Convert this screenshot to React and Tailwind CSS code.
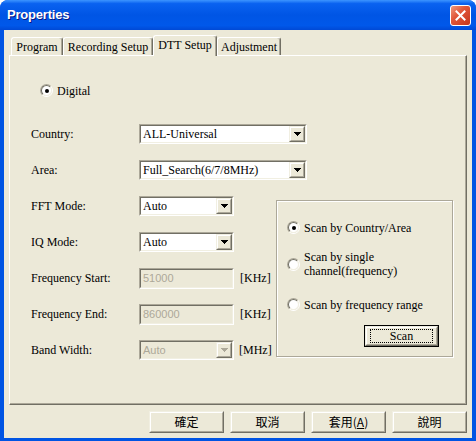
import React from 'react';

const serif = "font-['Liberation_Serif',serif] text-[12px]";

function Sunken({ className = '', inner = '', children }) {
  return (
    <div className={`border border-t-[#aca899] border-l-[#aca899] border-r-white border-b-white ${className}`}>
      <div className={`h-full border border-t-[#716f64] border-l-[#716f64] border-r-[#f1efe2] border-b-[#f1efe2] ${inner}`}>
        {children}
      </div>
    </div>
  );
}

function Raised({ className = '', children }) {
  return (
    <div className={`border border-t-[#f1efe2] border-l-[#f1efe2] border-r-[#716f64] border-b-[#716f64] bg-[#ece9d8] ${className}`}>
      <div className="h-full border border-t-white border-l-white border-r-[#aca899] border-b-[#aca899] flex items-center justify-center">
        {children}
      </div>
    </div>
  );
}

const Arrow = ({ color = '#000' }) => (
  <svg width="7" height="4" viewBox="0 0 7 4" shapeRendering="crispEdges">
    <rect x="0" y="0" width="7" height="1" fill={color} />
    <rect x="1" y="1" width="5" height="1" fill={color} />
    <rect x="2" y="2" width="3" height="1" fill={color} />
    <rect x="3" y="3" width="1" height="1" fill={color} />
  </svg>
);

function Combo({ w, value, disabled }) {
  return (
    <Sunken className={`h-[20px] ${w}`} inner={`flex items-center ${disabled ? 'bg-[#ece9d8]' : 'bg-white'}`}>
      <span
        className={
          disabled
            ? "flex-1 pl-[2px] font-['Liberation_Sans',sans-serif] text-[11px] text-[#aca899]"
            : `flex-1 pl-[2px] ${serif} text-black`
        }
      >
        {value}
      </span>
      <Raised className="w-[16px] h-[16px]">
        <Arrow color={disabled ? '#aca899' : '#000'} />
      </Raised>
    </Sunken>
  );
}

function TextBox({ value }) {
  return (
    <Sunken className="h-[21px] w-[95px]" inner="flex items-center bg-[#ece9d8]">
      <span className="pl-[2px] font-['Liberation_Sans',sans-serif] text-[11px] text-[#aca899]">{value}</span>
    </Sunken>
  );
}

function Radio({ checked }) {
  return (
    <div className="w-[13px] h-[13px] shrink-0 rounded-full border border-t-[#aca899] border-l-[#aca899] border-r-white border-b-white">
      <div className="w-full h-full rounded-full border border-t-[#716f64] border-l-[#716f64] border-r-[#f1efe2] border-b-[#f1efe2] bg-white flex items-center justify-center">
        {checked && <div className="w-[4px] h-[4px] rounded-full bg-black" />}
      </div>
    </div>
  );
}

function Row({ label, children }) {
  return (
    <div className="h-[36px] flex items-center">
      <span className={`w-[108px] ${serif} text-black`}>{label}</span>
      {children}
    </div>
  );
}

function Tab({ label, active, w }) {
  return (
    <div
      className={`${w} ${
        active ? 'h-[21px] -mb-[1px] relative z-10' : 'h-[18px]'
      } rounded-t-[3px] border-t border-l border-t-white border-l-white border-r border-r-[#716f64] bg-[#ece9d8] shadow-[inset_-1px_0_0_#aca899] flex items-center justify-center ${serif} text-black ${
        active ? 'pb-[3px]' : ''
      }`}
    >
      {label}
    </div>
  );
}

function DlgButton({ children }) {
  return (
    <Raised className="w-[75px] h-[22px]">
      <span className="font-['Noto_Sans_CJK_TC',sans-serif] text-[12px] text-black leading-none">{children}</span>
    </Raised>
  );
}

export default function App() {
  return (
    <div className="w-[476px] h-[441px] rounded-t-[8px] bg-[#0054e3] flex flex-col overflow-hidden">
      {/* Title bar */}
      <div className="h-[30px] shrink-0 flex items-center justify-between pl-[7px] pr-[5px] bg-[linear-gradient(to_bottom,#3d95ff_0%,#0a62f0_12%,#0055e5_50%,#0058ea_85%,#0049d6_100%)]">
        <span className="font-['Liberation_Sans',sans-serif] font-bold text-[13px] text-white [text-shadow:1px_1px_#0a1883] tracking-[-0.2px]">
          Properties
        </span>
        <div className="w-[21px] h-[21px] rounded-[3px] border border-white bg-[linear-gradient(135deg,#f09a7e_0%,#e1573a_40%,#c5361b_100%)] flex items-center justify-center">
          <svg width="11" height="11" viewBox="0 0 11 11">
            <path d="M1.5 1.5l8 8M9.5 1.5l-8 8" stroke="#fff" strokeWidth="2" strokeLinecap="square" />
          </svg>
        </div>
      </div>

      {/* Body */}
      <div className="flex-1 mx-[4px] mb-[3px] bg-[#ece9d8] flex flex-col pt-[5px]">
        {/* Tabs */}
        <div className="h-[20px] flex items-end pl-[7px]">
          <Tab label="Program" w="w-[52px]" />
          <Tab label="Recording Setup" w="w-[90px]" />
          <Tab label="DTT Setup" w="w-[64px]" active />
          <Tab label="Adjustment" w="w-[64px]" />
        </div>

        {/* Panel */}
        <div className="mx-[5px] h-[350px] border border-t-white border-l-white border-r-[#716f64] border-b-[#716f64] shadow-[inset_-1px_-1px_0_#aca899] flex flex-col">
          <div className="mt-[28px] ml-[30px] flex items-center gap-[4px] h-[13px]">
            <Radio checked />
            <span className={`${serif} text-black`}>Digital</span>
          </div>

          <div className="mt-[19px] pl-[21px] flex flex-col">
            <Row label="Country:">
              <Combo w="w-[168px]" value="ALL-Universal" />
            </Row>
            <Row label="Area:">
              <Combo w="w-[168px]" value="Full_Search(6/7/8MHz)" />
            </Row>

            <div className="flex">
              <div className="w-[245px] flex flex-col">
                <Row label="FFT Mode:">
                  <Combo w="w-[95px]" value="Auto" />
                </Row>
                <Row label="IQ Mode:">
                  <Combo w="w-[95px]" value="Auto" />
                </Row>
                <Row label="Frequency Start:">
                  <TextBox value="51000" />
                  <span className={`ml-[6px] ${serif} text-black`}>[KHz]</span>
                </Row>
                <Row label="Frequency End:">
                  <TextBox value="860000" />
                  <span className={`ml-[6px] ${serif} text-black`}>[KHz]</span>
                </Row>
                <Row label="Band Width:">
                  <Combo w="w-[95px]" value="Auto" disabled />
                  <span className={`ml-[5px] ${serif} text-black`}>[MHz]</span>
                </Row>
              </div>

              {/* Scan group */}
              <div className="mt-[12px] w-[177px] h-[157px] border border-[#aca899] shadow-[1px_1px_0_#fff,inset_1px_1px_0_#fff] flex flex-col pl-[10px]">
                <div className="mt-[20px] flex items-center gap-[4px] h-[13px]">
                  <Radio checked />
                  <span className={`${serif} text-black`}>Scan by Country/Area</span>
                </div>
                <div className="mt-[16px] flex items-center gap-[4px] h-[28px]">
                  <Radio />
                  <div className={`${serif} text-black leading-[14px] flex flex-col`}>
                    <span>Scan by single</span>
                    <span>channel(frequency)</span>
                  </div>
                </div>
                <div className="mt-[20px] flex items-center gap-[4px] h-[13px]">
                  <Radio />
                  <span className={`${serif} text-black`}>Scan by frequency range</span>
                </div>
                <div className="mt-[14px] flex justify-end pr-[13px]">
                  <div className="border border-black">
                    <Raised className="w-[73px] h-[20px]">
                      <span className={`${serif} text-black border border-dotted border-black px-[19px] leading-[12px]`}>
                        Scan
                      </span>
                    </Raised>
                  </div>
                </div>
              </div>
            </div>
          </div>
        </div>

        {/* Buttons */}
        <div className="mt-[6px] flex justify-end gap-[6px] pr-[5px]">
          <DlgButton>確定</DlgButton>
          <DlgButton>取消</DlgButton>
          <DlgButton>
            套用(<span className="underline">A</span>)
          </DlgButton>
          <DlgButton>說明</DlgButton>
        </div>
      </div>
    </div>
  );
}
